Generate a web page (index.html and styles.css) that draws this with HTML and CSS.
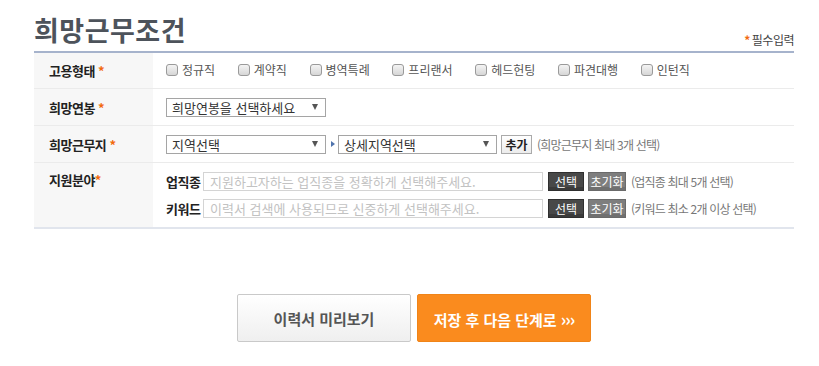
FILE: index.html
```html
<!DOCTYPE html>
<html lang="ko">
<head>
<meta charset="UTF-8">
<meta name="viewport" content="width=device-width, initial-scale=1.0">
<title>희망근무조건</title>
<link rel="stylesheet" href="styles.css">
</head>
<body>
  <div class="wrap">
    <div class="title-bar">
      <h2 class="title">희망근무조건</h2>
      <span class="req-note"><span class="req-mark">*</span>필수입력</span>
    </div>

    <table class="form-table">
      <tr>
        <th>고용형태 <span class="star">*</span></th>
        <td>
          <label class="chk"><span class="box"></span>정규직</label>
          <label class="chk"><span class="box"></span>계약직</label>
          <label class="chk"><span class="box"></span>병역특례</label>
          <label class="chk"><span class="box"></span>프리랜서</label>
          <label class="chk"><span class="box"></span>헤드헌팅</label>
          <label class="chk"><span class="box"></span>파견대행</label>
          <label class="chk"><span class="box"></span>인턴직</label>
        </td>
      </tr>
      <tr>
        <th>희망연봉 <span class="star">*</span></th>
        <td>
          <div class="line">
            <div class="select sel-wide"><span>희망연봉을 선택하세요</span><i class="tri"></i></div>
          </div>
        </td>
      </tr>
      <tr>
        <th>희망근무지 <span class="star">*</span></th>
        <td>
          <div class="line">
            <div class="select sel-wide"><span>지역선택</span><i class="tri"></i></div>
            <i class="go"></i>
            <div class="select sel-sub"><span>상세지역선택</span><i class="tri"></i></div>
            <button type="button" class="btn-add">추가</button>
            <span class="hint">(희망근무지 최대 3개 선택)</span>
          </div>
        </td>
      </tr>
      <tr class="last">
        <th class="top">지원분야<span class="star">*</span></th>
        <td class="multi">
          <div class="line">
            <span class="sub-label">업직종</span>
            <input type="text" class="field" placeholder="지원하고자하는 업직종을 정확하게 선택해주세요.">
            <button type="button" class="btn-dark">선택</button>
            <button type="button" class="btn-gray">초기화</button>
            <span class="hint">(업직종 최대 5개 선택)</span>
          </div>
          <div class="line">
            <span class="sub-label">키워드</span>
            <input type="text" class="field" placeholder="이력서 검색에 사용되므로 신중하게 선택해주세요.">
            <button type="button" class="btn-dark">선택</button>
            <button type="button" class="btn-gray">초기화</button>
            <span class="hint">(키워드 최소 2개 이상 선택)</span>
          </div>
        </td>
      </tr>
    </table>

    <div class="actions">
      <button type="button" class="btn-preview">이력서 미리보기</button>
      <button type="button" class="btn-next">저장 후 다음 단계로 <span class="chev">›››</span></button>
    </div>
  </div>
</body>
</html>
```

FILE: styles.css
```css
body {
  margin: 0;
  font-family: "Noto Sans CJK KR", "Noto Sans", sans-serif;
  font-size: 13px;
  color: #333;
  background: #fff;
}
.wrap {
  width: 760px;
  margin-left: 34px;
}
.title-bar {
  display: flex;
  height: 51px;
  box-sizing: border-box;
  padding-top: 16px;
}
.title {
  margin: 0;
  font-size: 27px;
  line-height: 27px;
  font-weight: bold;
  color: #4d535b;
  letter-spacing: 0.5px;
}
.req-note {
  margin-left: auto;
  align-self: flex-end;
  margin-bottom: 4px;
  font-size: 12px;
  line-height: 14px;
  letter-spacing: -0.5px;
  color: #444;
}
.req-mark {
  color: #f26a0f;
  font-weight: bold;
  margin-right: 2px;
}
.form-table {
  width: 760px;
  border-collapse: collapse;
  border-top: 2px solid #a6b3cc;
}
.form-table th {
  width: 104px;
  padding: 0 0 0 15px;
  background: #f7f7f7;
  text-align: left;
  font-weight: bold;
  color: #222;
  letter-spacing: -0.5px;
  border-bottom: 1px solid #ebebeb;
  height: 36px;
}
.form-table th.top {
  vertical-align: top;
  padding-top: 7px;
}
.form-table td {
  padding: 0 0 0 13px;
  border-bottom: 1px solid #ebebeb;
  height: 36px;
}
.form-table tr:first-child th,
.form-table tr:first-child td {
  border-top: 1px solid #e3e7ef;
  height: 35px;
}
.form-table tr.last th,
.form-table tr.last td {
  border-bottom: 2px solid #e1e5ed;
}
.form-table td.multi {
  padding-top: 9px;
  padding-bottom: 9px;
  height: auto;
}
.multi .line + .line {
  margin-top: 8px;
}
.star {
  color: #f26a0f;
  font-size: 13px;
}
.chk {
  display: inline-flex;
  align-items: center;
  margin-right: 19px;
  font-size: 12px;
  line-height: 16px;
  color: #555;
}
.chk:last-child {
  margin-right: 0;
}
.box {
  width: 10px;
  height: 10px;
  margin-right: 4px;
  border: 1px solid #9a9a9a;
  border-radius: 3px;
  background: linear-gradient(#f4f4f4, #d6d6d6);
}
.line {
  display: flex;
  align-items: center;
  height: 19px;
}
.select {
  display: flex;
  align-items: center;
  justify-content: space-between;
  box-sizing: border-box;
  height: 19px;
  padding: 0 7px 0 5px;
  border: 1px solid #a5a5a5;
  background: #fff;
  color: #333;
  line-height: 17px;
}
.sel-wide {
  width: 160px;
}
.sel-sub {
  width: 159px;
}
.tri {
  width: 0;
  height: 0;
  border-left: 3px solid transparent;
  border-right: 3px solid transparent;
  border-top: 6px solid #555;
}
.go {
  width: 0;
  height: 0;
  margin: 0 3px 0 5px;
  border-top: 3px solid transparent;
  border-bottom: 3px solid transparent;
  border-left: 4px solid #4f74ad;
}
.btn-add {
  box-sizing: border-box;
  width: 31px;
  height: 19px;
  margin-left: 4px;
  padding: 0;
  border: 1px solid #aaa;
  background: linear-gradient(#fff, #ececec);
  font-family: inherit;
  font-size: 12px;
  font-weight: bold;
  line-height: 17px;
  color: #222;
}
.hint {
  margin-left: 5px;
  font-size: 12px;
  letter-spacing: -0.8px;
  color: #777;
  line-height: 19px;
}
.sub-label {
  width: 37px;
  font-weight: bold;
  color: #222;
  letter-spacing: -0.5px;
}
.field {
  box-sizing: border-box;
  width: 340px;
  height: 19px;
  padding: 0 6px;
  border: 1px solid #d4d4d4;
  font-family: inherit;
  font-size: 13px;
  color: #333;
}
.field::placeholder {
  color: #c2c2c2;
}
.btn-dark,
.btn-gray {
  box-sizing: border-box;
  height: 19px;
  padding: 0;
  font-family: inherit;
  font-size: 12px;
  line-height: 17px;
  color: #fff;
}
.btn-dark {
  width: 36px;
  margin-left: 5px;
  border: 1px solid #2f2f2f;
  background: #484848;
  box-shadow: inset 0 -3px 0 #3a3a3a;
}
.btn-gray {
  width: 38px;
  margin-left: 4px;
  border: 1px solid #6a6a6a;
  background: #7e7e7e;
  box-shadow: inset 0 -3px 0 #707070;
}
.actions {
  display: flex;
  justify-content: center;
  gap: 6px;
  margin-top: 65px;
}
.btn-preview,
.btn-next {
  width: 174px;
  height: 48px;
  border-radius: 2px;
  font-family: inherit;
  font-size: 15px;
  font-weight: bold;
  cursor: pointer;
}
.btn-preview {
  border: 1px solid #c9c9c9;
  background: linear-gradient(#fff, #efefef);
  color: #555;
}
.btn-next {
  border: 1px solid #f08418;
  background: #fa8b1e;
  color: #fff;
}
.chev {
  font-size: 17px;
  letter-spacing: -1px;
}
```
